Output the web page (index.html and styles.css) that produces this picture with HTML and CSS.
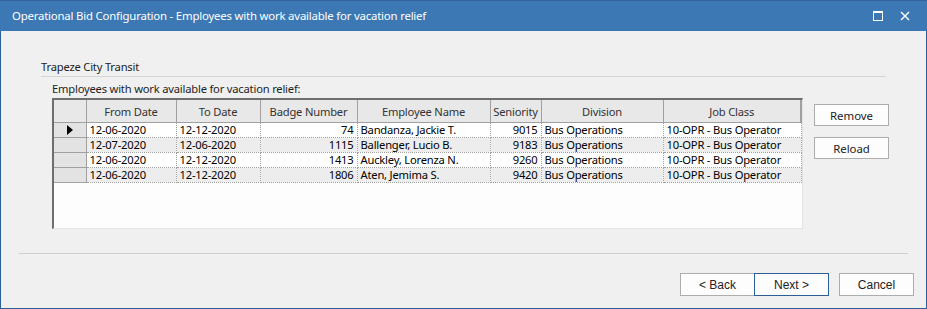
FILE: index.html
```html
<!DOCTYPE html>
<html>
<head>
    <title>Operational Bid Configuration</title>
    <link rel="stylesheet" href="styles.css">
</head>
<body>
    <div class="window">
        <div class="title-bar">
            <div class="title">Operational Bid Configuration - Employees with work available for vacation relief</div>
            <div class="title-buttons">
                <span class="tb-btn">
                    <svg width="10" height="10" viewBox="0 0 10 10"><rect x="0.5" y="0.5" width="9" height="9" fill="none" stroke="#fff" stroke-width="1"/><line x1="0" y1="1.5" x2="10" y2="1.5" stroke="#fff" stroke-width="1"/></svg>
                </span>
                <span class="tb-btn">
                    <svg width="10" height="10" viewBox="0 0 10 10"><path d="M1 1 L9 9 M9 1 L1 9" stroke="#fff" stroke-width="1.4"/></svg>
                </span>
            </div>
        </div>

        <div class="content">
            <div class="group-title">Trapeze City Transit</div>

            <div class="panel">
                <div class="grid-area">
                    <div class="grid-label">Employees with work available for vacation relief:</div>
                    <div class="grid">
                        <table>
                            <colgroup>
                                <col style="width:32px">
                                <col style="width:90px">
                                <col style="width:84px">
                                <col style="width:97px">
                                <col style="width:133px">
                                <col style="width:51px">
                                <col style="width:122px">
                                <col style="width:138px">
                            </colgroup>
                            <thead>
                                <tr>
                                    <th class="row-head"></th>
                                    <th>From Date</th>
                                    <th>To Date</th>
                                    <th>Badge Number</th>
                                    <th>Employee Name</th>
                                    <th>Seniority</th>
                                    <th>Division</th>
                                    <th>Job Class</th>
                                </tr>
                            </thead>
                            <tbody>
                                <tr>
                                    <td class="row-head"><span class="arrow"></span></td>
                                    <td>12-06-2020</td>
                                    <td>12-12-2020</td>
                                    <td class="num">74</td>
                                    <td>Bandanza, Jackie T.</td>
                                    <td class="num">9015</td>
                                    <td>Bus Operations</td>
                                    <td>10-OPR - Bus Operator</td>
                                </tr>
                                <tr class="alt">
                                    <td class="row-head"></td>
                                    <td>12-07-2020</td>
                                    <td>12-06-2020</td>
                                    <td class="num">1115</td>
                                    <td>Ballenger, Lucio B.</td>
                                    <td class="num">9183</td>
                                    <td>Bus Operations</td>
                                    <td>10-OPR - Bus Operator</td>
                                </tr>
                                <tr>
                                    <td class="row-head"></td>
                                    <td>12-06-2020</td>
                                    <td>12-12-2020</td>
                                    <td class="num">1413</td>
                                    <td>Auckley, Lorenza N.</td>
                                    <td class="num">9260</td>
                                    <td>Bus Operations</td>
                                    <td>10-OPR - Bus Operator</td>
                                </tr>
                                <tr class="alt">
                                    <td class="row-head"></td>
                                    <td>12-06-2020</td>
                                    <td>12-12-2020</td>
                                    <td class="num">1806</td>
                                    <td>Aten, Jemima S.</td>
                                    <td class="num">9420</td>
                                    <td>Bus Operations</td>
                                    <td>10-OPR - Bus Operator</td>
                                </tr>
                            </tbody>
                        </table>
                    </div>
                </div>

                <div class="side-buttons">
                    <button class="btn side">Remove</button>
                    <button class="btn side">Reload</button>
                </div>
            </div>
        </div>

        <div class="footer">
            <button class="btn wiz">&lt; Back</button>
            <button class="btn wiz default">Next &gt;</button>
            <button class="btn wiz cancel">Cancel</button>
        </div>
    </div>
</body>
</html>
```

FILE: styles.css
```css
body {
    margin: 0;
    font-family: "Noto Sans", "Open Sans", sans-serif;
    font-size: 11.2px;
    letter-spacing: -0.2px;
    color: #000;
    background: #f0f0f0;
}

.window {
    width: 927px;
    height: 309px;
    box-sizing: border-box;
    border: 1px solid #2b5f96;
    border-top: none;
    background: #f0f0f0;
    display: flex;
    flex-direction: column;
}

.title-bar {
    height: 31px;
    background: #3c78b3;
    border-top: 1px solid #2f6399;
    box-sizing: border-box;
    margin: 0 -1px;
    display: flex;
    align-items: center;
    justify-content: space-between;
    color: #fff;
}

.title {
    padding-left: 12px;
    font-size: 11.4px;
    padding-bottom: 2px;
}

.title-buttons {
    display: flex;
    gap: 17px;
    padding-right: 17px;
}

.tb-btn {
    display: flex;
    width: 10px;
    height: 10px;
}

.content {
    padding: 28px 40px 0 40px;
    flex: 1;
}

.group-title {
    height: 17px;
    line-height: 15px;
    border-bottom: 1px solid #d5d5d5;
    color: #222;
}

.panel {
    display: flex;
    padding-left: 11px;
    gap: 11px;
}

.grid-label {
    line-height: 15px;
    margin-top: 4px;
    margin-bottom: 2px;
    color: #1e1e1e;
}

.grid {
    width: 751px;
    height: 131px;
    box-sizing: border-box;
    border-top: 2px solid #6e6e6e;
    border-left: 2px solid #6e6e6e;
    border-right: 1px solid #e3e3e3;
    border-bottom: 1px solid #e3e3e3;
    background: #fdfdfd;
}

table {
    border-collapse: collapse;
    table-layout: fixed;
    width: 747px;
}

th {
    height: 22px;
    padding: 0;
    background: #e8e8e8;
    border-right: 1px solid #a0a0a0;
    border-bottom: 1px solid #a0a0a0;
    font-weight: normal;
    color: #333;
    text-align: center;
}

th:last-child {
    border-right: 2px solid #a0a0a0;
}

td {
    height: 14px;
    padding: 0 3px;
    border-right: 1px dotted #a0a0a0;
    border-bottom: 1px dotted #a0a0a0;
    line-height: 14px;
    white-space: nowrap;
    overflow: hidden;
    background: #fff;
}

tr.alt td {
    background: #ededed;
}

td.num {
    text-align: right;
}

td.row-head {
    background: #e3e3e3;
    border-right: 1px solid #a0a0a0;
    border-bottom: 1px solid #a0a0a0;
    position: relative;
}

tr.alt td.row-head {
    background: #e3e3e3;
}

.arrow {
    position: absolute;
    left: 13px;
    top: 2px;
    width: 0;
    height: 0;
    border-top: 5px solid transparent;
    border-bottom: 5px solid transparent;
    border-left: 6px solid #000;
}

.side-buttons {
    display: flex;
    flex-direction: column;
    gap: 11px;
    padding-top: 27px;
}

.btn {
    font-family: "Noto Sans", sans-serif;
    font-size: 11.4px;
    background: #fdfdfd;
    border: 1px solid #adadad;
    color: #222;
    padding: 0;
    box-sizing: border-box;
}

.btn.side {
    width: 75px;
    height: 22px;
}

.footer {
    margin: 0 18px 0 18px;
    border-top: 1px solid #cfcfcf;
    height: 55px;
    box-sizing: border-box;
    display: flex;
    justify-content: flex-end;
    align-items: flex-start;
    padding-top: 19px;
}

.btn.wiz {
    font-family: "Liberation Sans", Arial, sans-serif;
    font-size: 12px;
    letter-spacing: 0;
    width: 75px;
    height: 23px;
    background: #fdfdfd;
}

.btn.default {
    border-color: #2b5f96;
    margin-left: -1px;
}

.btn.cancel {
    margin-left: 10px;
    margin-right: -6px;
}
```
